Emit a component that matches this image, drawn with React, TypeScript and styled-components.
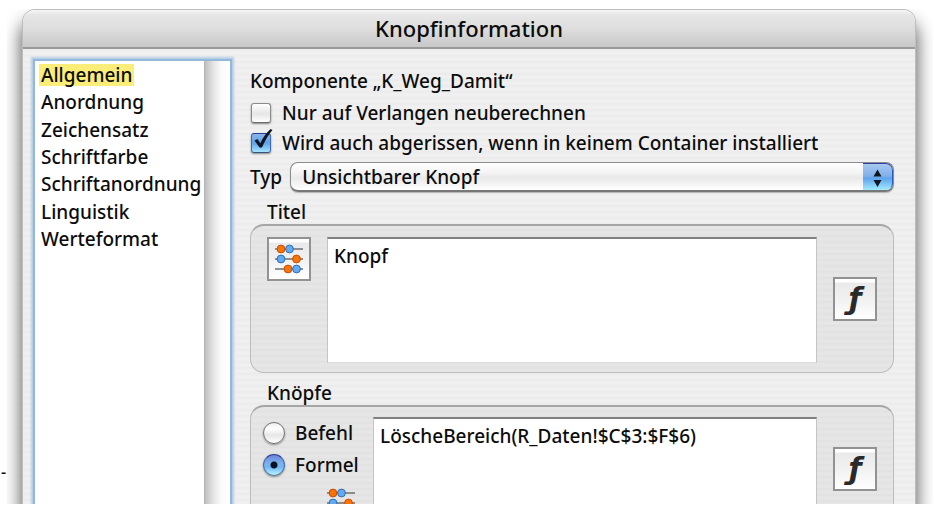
import React from "react";
import styled, { createGlobalStyle, css } from "styled-components";

const GlobalStyle = createGlobalStyle`
  *, *::before, *::after { box-sizing: border-box; }
  body {
    margin: 0;
    background: #fff;
    color: #0c0c0c;
    font-family: "Noto Sans", "Open Sans", sans-serif;
    font-size: 19px;
    font-weight: 500;
    line-height: 24px;
  }
`;

const stripes = (a: string, b: string) => css`
  background: repeating-linear-gradient(to bottom, ${a} 0, ${a} 2px, ${b} 4px, ${a} 6px);
`;

const Page = styled.div`
  display: flex;
  height: 100vh;
  padding: 9px 1px 21px 0;
  overflow: hidden;
`;

const Margin = styled.aside`
  flex: 0 0 7px;
  align-self: flex-end;
  padding: 0 0 20px 1px;
  font-size: 16px;
  overflow: hidden;
`;

const Stage = styled.main`
  flex: 1;
  min-width: 0;
  display: flex;
  overflow: hidden;
  padding: 1px 18px 0 16px;
`;

const Dialog = styled.section`
  flex: 1;
  min-width: 0;
  display: flex;
  flex-direction: column;
  border-radius: 12px 12px 0 0;
  box-shadow: 0 0 0 1px #bdbdbd, 0 14px 18px 2px rgba(0, 0, 0, 0.65);
  ${stripes("#f0f0f0", "#ebebeb")}
`;

const TitleBar = styled.header`
  flex: none;
  height: 39px;
  border-radius: 12px 12px 0 0;
  border-bottom: 2px solid #999;
  background: linear-gradient(#f6f6f6 0, #e6e6e6 5px, #dedede 50%, #c8c8c8 100%);
  text-align: center;
`;

const Title = styled.h1`
  margin: 0;
  font-size: 22px;
  font-weight: 500;
  line-height: 37px;
`;

const Body = styled.div`
  flex: 1;
  min-height: 0;
  display: flex;
  gap: 20px;
  padding: 12px 21px 0 12px;
`;

const Sidebar = styled.nav`
  flex: 0 0 195px;
  display: flex;
  background: #fff;
  box-shadow: 0 0 0 2px #93b8dc, 0 0 2px 4px #b5cde5;
`;

const List = styled.ul`
  flex: 1;
  display: grid;
  grid-auto-rows: 1fr;
  height: 192px;
  margin: 0;
  padding: 0 0 0 4px;
  list-style: none;
`;

const Item = styled.li`
  display: flex;
  align-items: center;
`;

const ItemLink = styled.a<{ $active?: boolean }>`
  padding: 0 2px;
  line-height: 22px;
  color: inherit;
  text-decoration: none;
  background: ${(p) => (p.$active ? "#fbee78" : "transparent")};
`;

const ScrollTrack = styled.div`
  flex: 0 0 26px;
  border-left: 1px solid #b4b4b4;
  background: linear-gradient(to right, #bfbfbf, #e6e6e6 35%, #fafafa 65%, #fff);
`;

const Form = styled.form`
  flex: 1;
  min-width: 0;
  display: flex;
  flex-direction: column;
`;

const Heading = styled.p`
  margin: 8px 0 5px;
`;

const CheckRow = styled.label`
  flex: none;
  display: flex;
  align-items: center;
  gap: 10px;
  height: 30px;
`;

const CheckControl = styled.span`
  position: relative;
  flex: none;
  width: 22px;
  height: 22px;
`;

const Checkbox = styled.input`
  appearance: none;
  display: block;
  width: 20px;
  height: 20px;
  margin: 1px;
  border: 1px solid #8a8a8a;
  border-bottom-color: #6c6c6c;
  border-radius: 3px;
  background: linear-gradient(#fff, #e6e6e6 55%, #fff);
  box-shadow: 0 1px 2px rgba(0, 0, 0, 0.45);

  &:checked {
    border-color: #2c3f98 #3f6bab #35567c;
    background: linear-gradient(#8bb3ea, #5ea2ea 50%, #a5e4ff);
  }
`;

const Tick = styled.svg`
  position: absolute;
  left: 0;
  top: -4px;
  width: 24px;
  height: 24px;
  pointer-events: none;
`;

const TypeRow = styled.div`
  flex: none;
  display: flex;
  align-items: center;
  gap: 8px;
  margin-top: 4px;
`;

const SelectBox = styled.span`
  position: relative;
  flex: 1;
  display: flex;
  height: 30px;
  overflow: hidden;
  border: 1px solid #8b8b8b;
  border-bottom: 2px solid #777;
  border-radius: 8px;
  background: linear-gradient(#fff, #f4f4f4 35%, #e9e9e9 55%, #fff);
  box-shadow: 0 1px 1px rgba(0, 0, 0, 0.25);
`;

const Select = styled.select`
  appearance: none;
  flex: 1;
  border: 0;
  padding: 0 40px 0 11px;
  background: transparent;
  color: inherit;
  font: inherit;
`;

const SelectCap = styled.span`
  position: absolute;
  inset: -1px -1px -1px auto;
  width: 31px;
  display: grid;
  place-items: center;
  border-top: 2px solid #3240a0;
  border-right: 2px solid #2a5cc0;
  border-radius: 0 8px 8px 0;
  background: linear-gradient(#a9c8ee, #7fb0ea 45%, #5ca3ee 52%, #a8f0ff);
  pointer-events: none;
`;

const Fieldset = styled.fieldset<{ $grow?: boolean }>`
  flex: ${(p) => (p.$grow ? "1 0 auto" : "none")};
  min-width: 0;
  margin: 0;
  padding: 0;
  border: 0;
`;

const Legend = styled.legend`
  padding: 8px 0 0 17px;
`;

const Panel = styled.div<{ $open?: boolean }>`
  display: flex;
  gap: 16px;
  padding: 11px 16px 9px;
  border: 1px solid #bcbcbc;
  border-top: 2px solid #a6a6a6;
  border-radius: 14px;
  ${stripes("#e6e6e6", "#e1e1e1")}
  ${(p) =>
    p.$open &&
    css`
      padding: 10px 16px 0 12px;
      gap: 0;
      border-bottom: 0;
      border-radius: 14px 14px 0 0;
    `}
`;

const TextArea = styled.textarea`
  flex: 1;
  min-width: 0;
  height: 126px;
  margin: 0;
  padding: 5px 6px;
  border: 1px solid #c4c4c4;
  border-top: 2px solid #828282;
  border-bottom-color: #dcdcdc;
  background: #fff;
  color: inherit;
  font: inherit;
  resize: none;
  outline: none;
`;

const IconButton = styled.button<{ $plain?: boolean; $top?: number }>`
  flex: none;
  display: grid;
  place-items: center;
  width: 44px;
  height: 44px;
  margin: ${(p) => p.$top ?? 0}px 0 0;
  padding: 0;
  border: 2px solid #929292;
  background: linear-gradient(#fff 0, #fff 3px, #eaeaea 4px, #f1f1f1 50%, #fff);
  color: #2a2a2a;
  ${(p) =>
    p.$plain &&
    css`
      align-self: flex-end;
      margin-right: 10px;
      border-color: transparent;
      background: none;
    `}
`;

const FunctionSign = styled.span`
  font: italic bold 30px/36px "DejaVu Sans", sans-serif;
`;

const Choices = styled.div`
  flex: 0 0 110px;
  display: flex;
  flex-direction: column;
`;

const RadioRow = styled.label`
  display: flex;
  align-items: center;
  gap: 10px;
  height: 32px;
`;

const Radio = styled.input`
  appearance: none;
  flex: none;
  width: 22px;
  height: 22px;
  margin: 0;
  border: 1px solid #747474;
  border-radius: 50%;
  background: linear-gradient(#f0f0f0, #fff 30%, #e6e6e6 60%, #fff);
  box-shadow: 0 1px 2px rgba(0, 0, 0, 0.4);

  &:checked {
    border-color: #2c3a92 #4a6ca6 #56809c;
    background:
      radial-gradient(circle, #0a1420 0, #0a1420 3px, transparent 4px),
      linear-gradient(#6b86da, #7fb4ee 45%, #6db5f4 60%, #bdf4ff);
  }
`;

const TextColumn = styled.div`
  flex: 1;
  display: flex;
  gap: 16px;
  min-width: 0;
`;

const SliderIcon = () => (
  <svg width="30" height="30" viewBox="0 0 30 30" aria-hidden="true">
    <path d="M1 5H29M1 15H29M1 25H29" stroke="#6d6d6d" strokeWidth="1.6" />
    <g stroke="#c34f08" fill="#f97306">
      <circle cx="7" cy="5" r="3.9" />
      <circle cx="22.5" cy="15" r="3.9" />
      <circle cx="14" cy="25" r="3.9" />
    </g>
    <g stroke="#2e6eb4" fill="#61aaf4">
      <circle cx="15.5" cy="5" r="3.9" />
      <circle cx="7" cy="15" r="3.9" />
      <circle cx="22.5" cy="25" r="3.9" />
    </g>
  </svg>
);

const sections = [
  "Allgemein",
  "Anordnung",
  "Zeichensatz",
  "Schriftfarbe",
  "Schriftanordnung",
  "Linguistik",
  "Werteformat",
];

export default function App() {
  return (
    <>
      <GlobalStyle />
      <Page>
        <Margin>-</Margin>
        <Stage>
          <Dialog aria-labelledby="dialog-title">
            <TitleBar>
              <Title id="dialog-title">Knopfinformation</Title>
            </TitleBar>
            <Body>
              <Sidebar>
                <List>
                  {sections.map((name, i) => (
                    <Item key={name}>
                      <ItemLink href={`#${name}`} $active={i === 0}>
                        {name}
                      </ItemLink>
                    </Item>
                  ))}
                </List>
                <ScrollTrack />
              </Sidebar>
              <Form>
                <Heading>Komponente „K_Weg_Damit“</Heading>
                <CheckRow>
                  <CheckControl>
                    <Checkbox type="checkbox" />
                  </CheckControl>
                  Nur auf Verlangen neuberechnen
                </CheckRow>
                <CheckRow>
                  <CheckControl>
                    <Checkbox type="checkbox" defaultChecked />
                    <Tick viewBox="0 0 24 24" aria-hidden="true">
                      <path d="M4.5 12.5 7.5 11 10.3 15.2C13 9.5 16.5 4.5 20.5 1L22.5 2C18.5 6.5 15 12.5 12 19.5H9.5Z" fill="#111722" />
                    </Tick>
                  </CheckControl>
                  Wird auch abgerissen, wenn in keinem Container installiert
                </CheckRow>
                <TypeRow>
                  <label htmlFor="type">Typ</label>
                  <SelectBox>
                    <Select id="type" defaultValue="invisible">
                      <option value="invisible">Unsichtbarer Knopf</option>
                    </Select>
                    <SelectCap>
                      <svg width="9" height="20" viewBox="0 0 9 20" aria-hidden="true">
                        <path d="M4.5 1.5 8.5 8.5H.5ZM.5 12H8.5L4.5 19Z" fill="#10161e" />
                      </svg>
                    </SelectCap>
                  </SelectBox>
                </TypeRow>
                <Fieldset>
                  <Legend>Titel</Legend>
                  <Panel>
                    <IconButton type="button" aria-label="Titeloptionen">
                      <SliderIcon />
                    </IconButton>
                    <TextArea aria-label="Titel" defaultValue="Knopf" />
                    <IconButton type="button" aria-label="Titelformel" $top={40}>
                      <FunctionSign>ƒ</FunctionSign>
                    </IconButton>
                  </Panel>
                </Fieldset>
                <Fieldset $grow>
                  <Legend>Knöpfe</Legend>
                  <Panel $open>
                    <Choices>
                      <RadioRow>
                        <Radio type="radio" name="action" />
                        Befehl
                      </RadioRow>
                      <RadioRow>
                        <Radio type="radio" name="action" defaultChecked />
                        Formel
                      </RadioRow>
                      <IconButton type="button" aria-label="Formeloptionen" $plain>
                        <SliderIcon />
                      </IconButton>
                    </Choices>
                    <TextColumn>
                      <TextArea
                        aria-label="Formel"
                        defaultValue="LöscheBereich(R_Daten!$C$3:$F$6)"
                      />
                      <IconButton type="button" aria-label="Knopfformel" $top={30}>
                        <FunctionSign>ƒ</FunctionSign>
                      </IconButton>
                    </TextColumn>
                  </Panel>
                </Fieldset>
              </Form>
            </Body>
          </Dialog>
        </Stage>
      </Page>
    </>
  );
}
